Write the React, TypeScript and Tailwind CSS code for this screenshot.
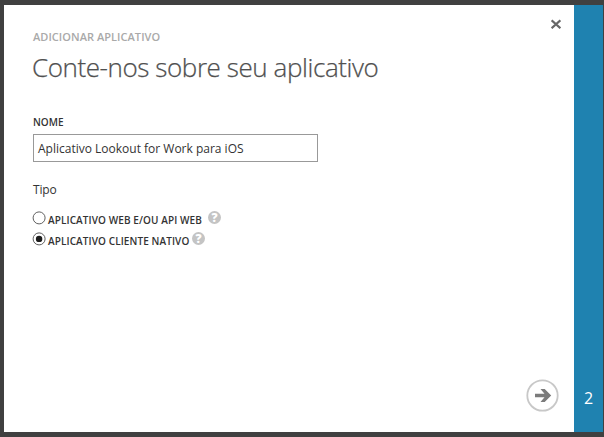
type OptionProps = { label: string; checked?: boolean; labelClass: string; helpClass: string };

function HelpBadge({ className }: { className: string }) {
  return (
    <span
      className={`flex size-[13px] shrink-0 items-center justify-center rounded-full bg-[#c4c4c4] text-[12px] leading-none font-extrabold text-white ${className}`}
    >
      ?
    </span>
  );
}

function TypeOption({ label, checked = false, labelClass, helpClass }: OptionProps) {
  return (
    <label className="flex h-[21px] items-start">
      <svg className="size-[13px] shrink-0 overflow-visible" viewBox="0 0 13 13">
        <circle cx="6.1" cy="6.9" r="6" fill="#fff" stroke="#606060" strokeWidth="1" />
        {checked && <circle cx="6.1" cy="6.9" r="3.2" fill="#1c1c1c" />}
      </svg>
      <span className={`mt-[2px] ml-[2px] text-[10px] leading-[15px] font-semibold tracking-[0.1px] whitespace-nowrap text-[#333] ${labelClass}`}>
        {label}
      </span>
      <HelpBadge className={helpClass} />
    </label>
  );
}

export default function App() {
  return (
    <div className="flex h-[437px] w-[604px] overflow-hidden bg-[#404040] pt-[5px] pr-px pb-[5px] pl-[4px] font-['Open_Sans','Noto_Sans',sans-serif]">
      <main className="flex w-[570px] justify-between bg-white">
        <section className="pl-[29px]">
          <p className="mt-[24px] h-[15px] w-max text-[11px] leading-[15px] font-semibold tracking-[0.05px] text-[#a9a9a9]">
            ADICIONAR APLICATIVO
          </p>
          <h1 className="mt-[4px] -ml-px h-[39px] w-max text-[26px] leading-[38px] font-light tracking-[-0.42px] text-[#505050] [-webkit-text-stroke:0.25px_#505050]">
            Conte-nos sobre seu aplicativo
          </h1>
          <div className="mt-[28px] h-[15px] w-max text-[10px] leading-[15px] font-semibold text-[#333]">NOME</div>
          <div className="mt-[4px] flex h-[28px] w-[285px] items-center border border-[#999] pt-[2px] pl-[4px] text-[12px] whitespace-nowrap text-[#333]">
            <span>Aplicativo Lookout for Work para iOS</span>
          </div>
          <div className="mt-[19px] h-[18px] w-max text-[12px] leading-[18px] tracking-[-0.2px] text-[#333]">Tipo</div>
          <div className="mt-[12px]">
            <TypeOption label="APLICATIVO WEB E/OU API WEB" labelClass="w-[155px]" helpClass="ml-[5px]" />
            <TypeOption label="APLICATIVO CLIENTE NATIVO" checked labelClass="w-[141px]" helpClass="ml-[3px]" />
          </div>
        </section>
        <aside className="flex flex-col items-end justify-between pt-[14px] pr-[13px] pb-[20px]">
          <svg className="size-[10px]" viewBox="0 0 10 10" stroke="#666" strokeWidth="2.2">
            <path d="M.6 1.4 9.4 9.2M9.4 1.4.6 9.2" />
          </svg>
          <svg className="mr-[2px] size-[33px]" viewBox="0 0 33 33">
            <circle cx="16.5" cy="16.5" r="15.2" fill="none" stroke="#c8c8c8" strokeWidth="1.8" />
            <path d="M9 14.7h9.5L14.5 10h4.2l6.5 6.5-6.5 6.5h-4.2l4-4.7H9z" fill="#7b7b7b" />
          </svg>
        </aside>
      </main>
      <nav className="flex w-[29px] items-end justify-center bg-[#1f82b0] pb-[23px] text-[16px] leading-[22px] text-white">2</nav>
    </div>
  );
}
